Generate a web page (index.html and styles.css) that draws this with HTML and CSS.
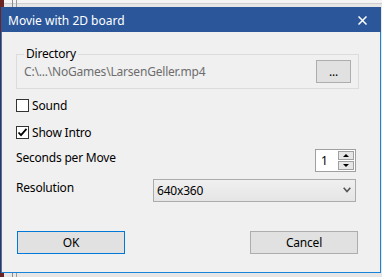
FILE: index.html
```html
<!DOCTYPE html>
<html lang="en">
<head>
  <meta charset="UTF-8" />
  <title>Movie with 2D board</title>
  <link rel="stylesheet" href="styles.css">
</head>
<body>
  <div class="dialog">
    <div class="titlebar">
      <span class="title">Movie with 2D board</span>
      <svg class="close" width="9" height="9" viewBox="0 0 9 9">
        <path d="M0.5 0.5 L8.5 8.5 M8.5 0.5 L0.5 8.5" stroke="#fff" stroke-width="1.5" />
      </svg>
    </div>

    <div class="content">
      <fieldset class="group">
        <legend>Directory</legend>
        <div class="path-row">
          <span class="path">C:\...\NoGames\LarsenGeller.mp4</span>
          <button class="btn browse">...</button>
        </div>
      </fieldset>

      <label class="check sound">
        <span class="box"></span>
        <span>Sound</span>
      </label>
      <label class="check intro">
        <span class="box">
          <svg width="11" height="11" viewBox="0 0 11 11">
            <path d="M1.5 5.5 L4 8.2 L9.5 1.8" fill="none" stroke="#000" stroke-width="1.8" />
          </svg>
        </span>
        <span>Show Intro</span>
      </label>

      <div class="field seconds">
        <span class="label">Seconds per Move</span>
        <div class="spinner">
          <span class="spin-value">1</span>
          <div class="spin-buttons">
            <span class="spin-btn"><span class="arrow up"></span></span>
            <span class="spin-btn"><span class="arrow down"></span></span>
          </div>
        </div>
      </div>

      <div class="field resolution">
        <span class="label">Resolution</span>
        <div class="combo">
          <span>640x360</span>
          <svg width="8" height="6" viewBox="0 0 8 6">
            <path d="M0.7 0.8 L4 4.5 L7.3 0.8" fill="none" stroke="#555" stroke-width="1.6" />
          </svg>
        </div>
      </div>

      <div class="actions">
        <button class="btn default">OK</button>
        <button class="btn">Cancel</button>
      </div>
    </div>
  </div>
</body>
</html>
```

FILE: styles.css
```css
* {
  box-sizing: border-box;
}

body {
  margin: 0;
  width: 382px;
  height: 277px;
  overflow: hidden;
  font-family: 'Noto Sans', 'Segoe UI', sans-serif;
  font-size: 12px;
  color: #000;
  background:
    linear-gradient(90deg, #6a2424 0 4px, transparent 4px),
    linear-gradient(90deg, transparent 12px, #8c8c8c 12px 13px, transparent 13px 16px, #9a9a9a 16px 17px, transparent 17px),
    linear-gradient(#f4f4f4 0 3px, #cfcfcf 3px 4px, #e6e6e6 4px);
}

.dialog {
  margin: 7px 0 0 1px;
  width: 380px;
  height: 266px;
  background-color: #f0f0f0;
  border: 1px solid #1883d7;
  border-top: 0;
}

.titlebar {
  height: 25px;
  margin: 0 -1px;
  padding: 1px 14px 0 7px;
  background-color: #2b579a;
  color: #fff;
  display: flex;
  align-items: center;
  justify-content: space-between;
}

.content {
  padding: 0 24px 0 14px;
  letter-spacing: -0.2px;
}

.group {
  margin: 16px 0 0;
  width: 343px;
  min-width: 0;
  padding: 0 7px 5px 7px;
  border: 1px solid #dcdcdc;
}

.group legend {
  padding: 0 2px;
  line-height: 12px;
}

.path-row {
  display: flex;
  align-items: center;
  justify-content: space-between;
}

.path {
  color: #6d6d6d;
  line-height: 16px;
}

.btn {
  font-family: inherit;
  font-size: 12px;
  letter-spacing: inherit;
  color: #000;
  height: 23px;
  padding: 0;
  background-color: #e1e1e1;
  border: 1px solid #adadad;
}

.browse {
  width: 35px;
}

.check {
  display: flex;
  align-items: center;
  gap: 3px;
  height: 13px;
  line-height: 16px;
}

.box {
  width: 13px;
  height: 13px;
  border: 1px solid #333;
  background-color: #fff;
  display: flex;
  align-items: center;
  justify-content: center;
}

.sound {
  margin-top: 10px;
}

.intro {
  margin-top: 14px;
}

.field {
  display: flex;
  align-items: flex-start;
  justify-content: space-between;
}

.field .label {
  margin-top: 1px;
  line-height: 16px;
}

.seconds {
  margin-top: 10px;
}

.resolution {
  margin-top: 7px;
}

.spinner {
  width: 41px;
  height: 23px;
  border: 1px solid #a0a0a0;
  background-color: #fff;
  display: flex;
  justify-content: space-between;
  padding: 1px 1px 1px 0;
}

.spin-value {
  padding-left: 5px;
  line-height: 20px;
}

.spin-buttons {
  display: flex;
  flex-direction: column;
  gap: 1px;
}

.spin-btn {
  width: 16px;
  height: 9px;
  border: 1px solid #a0a0a0;
  background-color: #e6e6e6;
  display: flex;
  align-items: center;
  justify-content: center;
}

.arrow {
  width: 0;
  height: 0;
  border-left: 3px solid transparent;
  border-right: 3px solid transparent;
}

.arrow.up {
  border-bottom: 3px solid #000;
}

.arrow.down {
  border-top: 3px solid #000;
}

.combo {
  width: 203px;
  height: 23px;
  border: 1px solid #acacac;
  background: linear-gradient(#f0f0f0, #e5e5e5);
  display: flex;
  align-items: center;
  justify-content: space-between;
  padding: 0 4px 1px 3px;
}

.actions {
  margin: 29px 0 0 1px;
  width: 341px;
  display: flex;
  justify-content: space-between;
}

.actions .btn {
  width: 108px;
}

.btn.default {
  border-color: #0078d7;
}
```
